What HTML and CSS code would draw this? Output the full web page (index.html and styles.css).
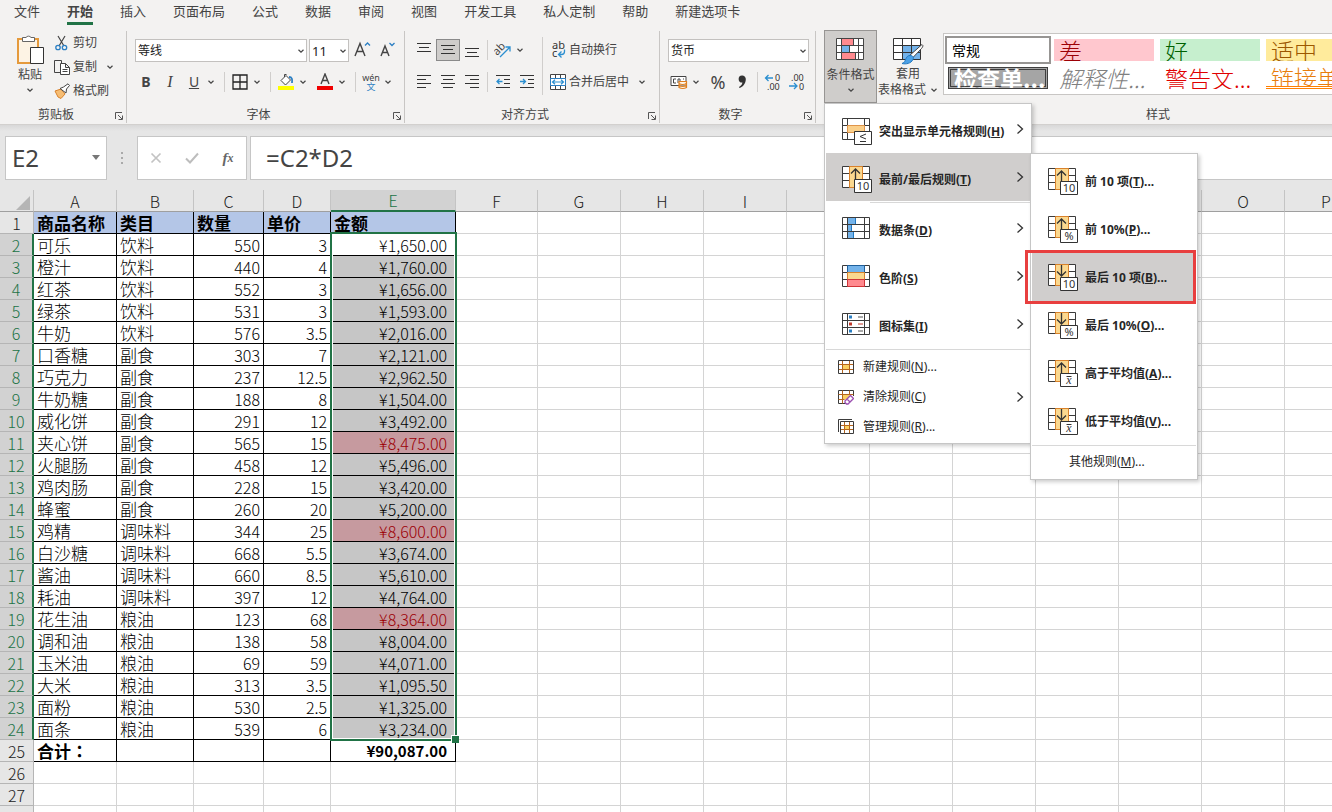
FILE: index.html
```html
<!DOCTYPE html>
<html lang="zh-CN">
<head>
<meta charset="utf-8">
<title>销售数据</title>
<link rel="stylesheet" href="styles.css">
</head>
<body>
<svg class="sprite" aria-hidden="true">
  <symbol id="chev" viewBox="0 0 8 8"><path d="M1.5 2.8 4 5.2 6.5 2.8" fill="none" stroke="#444" stroke-width="1.2"/></symbol>
  <symbol id="arrow" viewBox="0 0 8 12"><path d="M1.5 1.5 6.5 6 1.5 10.5" fill="none" stroke="#333" stroke-width="1.3"/></symbol>
  <symbol id="launch" viewBox="0 0 10 10"><path d="M1.5 8V1.5H8M4 4l4 4M8.5 4.500V8.500H4.500" fill="none" stroke="#555"/></symbol>
  <symbol id="grid" viewBox="0 0 30 28"><path d="M.5.5h27v21H.5zM.5 7.500h27M.5 14.500h27M5.500.5v21M22.500.5v21" fill="#fff" stroke="#3b3b3b"/></symbol>
  <symbol id="rank" viewBox="0 0 30 28">
    <path d="M.5.5h27v21H.5zM.5 7.500h7M.5 14.500h7M20 7.500h7.500M20 14.500h7.500" fill="#fff" stroke="#3b3b3b"/>
    <path d="M7.500.5h13v21h-13z" fill="#fbd88f" stroke="#d9822b"/>
  </symbol>
  <symbol id="up" viewBox="0 0 30 28"><path d="M13.500 14V3M9 7.500 13.500 3 18 7.500" fill="none" stroke="#333" stroke-width="1.300"/></symbol>
  <symbol id="down" viewBox="0 0 30 28"><path d="M13.500 1v11M9 7.500l4.500 4.500L18 7.500" fill="none" stroke="#333" stroke-width="1.300"/></symbol>
  <symbol id="badge" viewBox="0 0 30 28"><path d="M12.500 13.500h17v13h-17z" fill="#fff" stroke="#333"/></symbol>
</svg>

<div class="app">
  <nav class="tabs">
    <button>文件</button><button class="active">开始</button><button>插入</button><button>页面布局</button><button>公式</button><button>数据</button><button>审阅</button><button>视图</button><button>开发工具</button><button>私人定制</button><button>帮助</button><button>新建选项卡</button>
  </nav>

  <div class="ribbon">
    <section class="group clipboard">
      <div class="group-body">
        <button class="big paste">
          <svg width="28" height="32" viewBox="0 0 28 32"><path d="M2 5h20v24H2z" fill="#fdf3e4" stroke="#e59a3c" stroke-width="2"/><path d="M6.500 7.500v-4h3.500a3 3 0 0 1 5 0h3.500v4z" fill="#fff" stroke="#666"/><path d="M14.500 13.500h13v16h-13z" fill="#fff" stroke="#333"/></svg>
          <span>粘贴</span>
          <svg width="8" height="8"><use href="#chev"/></svg>
        </button>
        <div class="stack">
          <button class="cmd"><svg width="16" height="16" viewBox="0 0 16 16"><path d="M4 1l6 10M11 1 5 11" fill="none" stroke="#444" stroke-width="1.200"/><circle cx="4" cy="12.500" r="2.200" fill="none" stroke="#2b7fc3" stroke-width="1.300"/><circle cx="10.500" cy="12.500" r="2.200" fill="none" stroke="#2b7fc3" stroke-width="1.300"/></svg>剪切</button>
          <button class="cmd"><svg width="16" height="16" viewBox="0 0 16 16"><path d="M6 13.500H.5V1.500h7V4" fill="none" stroke="#444"/><path d="M6.500 4.500h5l4 4v7h-9zM11.500 4.500v4h4M8.500 10.500h5M8.500 12.500h5" fill="#fff" stroke="#444"/></svg>复制<svg class="gap" width="8" height="8"><use href="#chev"/></svg></button>
          <button class="cmd"><svg width="16" height="16" viewBox="0 0 16 16"><path d="M1 8l6-2 4 5-4 4.500L4 14z" fill="#f6bd73" stroke="#d9822b"/><path d="M6 5.500 9.500 4 14 .8l1.500 1.700L12.500 6l-.5 4z" fill="#fff" stroke="#444"/></svg>格式刷</button>
        </div>
      </div>
      <div class="group-foot"><span>剪贴板</span><button aria-label="剪贴板设置"><svg width="10" height="10"><use href="#launch"/></svg></button></div>
    </section>

    <section class="group font">
      <div class="group-body rows">
        <div class="row">
          <label class="combo wide"><select aria-label="字体"><option>等线</option></select><svg width="8" height="8"><use href="#chev"/></svg></label>
          <label class="combo size"><select aria-label="字号"><option>11</option></select><svg width="8" height="8"><use href="#chev"/></svg></label>
          <button class="tool" aria-label="增大字号"><svg width="18" height="18" viewBox="0 0 18 18"><path d="M1 15 6 2.500 11 15M2.800 10.500h6.500" fill="none" stroke="#444" stroke-width="1.400"/><path d="M11 4.500 13.500 2 16 4.500" fill="none" stroke="#2b7fc3" stroke-width="1.300"/></svg></button>
          <button class="tool" aria-label="减小字号"><svg width="18" height="18" viewBox="0 0 18 18"><path d="M3 15 7 5l4 10M4.500 11.500h5" fill="none" stroke="#444" stroke-width="1.400"/><path d="M11.500 2 14 4.500 16.500 2" fill="none" stroke="#2b7fc3" stroke-width="1.300"/></svg></button>
        </div>
        <div class="row">
          <button class="tool b">B</button><button class="tool i">I</button><button class="tool u">U</button><button class="drop" aria-label="下划线选项"><svg width="8" height="8"><use href="#chev"/></svg></button><span class="sep"></span>
          <button class="tool" aria-label="边框"><svg width="16" height="16" viewBox="0 0 16 16"><path d="M1 1h14v14H1zM8 1v14M1 8h14" fill="none" stroke="#222" stroke-width="1.300"/></svg></button><button class="drop" aria-label="边框选项"><svg width="8" height="8"><use href="#chev"/></svg></button><span class="sep"></span>
          <button class="tool" aria-label="填充颜色"><svg width="16" height="18" viewBox="0 0 16 18"><path d="M3 7.500 8 2.500l4.500 4.500-5 5zM6.500 4V1.500h2" fill="#fff" stroke="#444"/><path d="M11 4c3 0 3.500 2 3 6" fill="none" stroke="#2b7fc3" stroke-width="1.800"/><path d="M0 13h16v4H0z" fill="#ff0"/></svg></button><button class="drop" aria-label="填充颜色选项"><svg width="8" height="8"><use href="#chev"/></svg></button>
          <button class="tool" aria-label="字体颜色"><svg width="16" height="18" viewBox="0 0 16 18"><path d="M4 11 8 1l4 10M5.300 7.500h5.400" fill="none" stroke="#444" stroke-width="1.400"/><path d="M0 13h16v4H0z" fill="#f00000"/></svg></button><button class="drop" aria-label="字体颜色选项"><svg width="8" height="8"><use href="#chev"/></svg></button><span class="sep"></span>
          <button class="tool pinyin"><span>wén</span><span class="han">文</span></button><button class="drop" aria-label="拼音选项"><svg width="8" height="8"><use href="#chev"/></svg></button>
        </div>
      </div>
      <div class="group-foot"><span>字体</span><button aria-label="字体设置"><svg width="10" height="10"><use href="#launch"/></svg></button></div>
    </section>

    <section class="group align">
      <div class="group-body">
        <div class="rows">
          <div class="row">
            <button class="tool" aria-label="顶端对齐"><svg width="14" height="16" viewBox="0 0 14 16"><path d="M0 1.500h14M2 5.500h10M0 9.500h14" stroke="#333"/></svg></button>
            <button class="tool pressed" aria-label="垂直居中"><svg width="14" height="16" viewBox="0 0 14 16"><path d="M0 3.500h14M2 7.500h10M0 11.500h14" stroke="#333"/></svg></button>
            <button class="tool" aria-label="底端对齐"><svg width="14" height="16" viewBox="0 0 14 16"><path d="M0 6.500h14M2 10.500h10M0 14.500h14" stroke="#333"/></svg></button>
            <span class="sep"></span>
            <button class="tool" aria-label="方向"><svg width="18" height="18" viewBox="0 0 18 18"><text x="0" y="12" font-size="11" fill="#444" transform="rotate(-45 5 10)">ab</text><path d="M6 16 16 6M11.500 6H16v4.500" fill="none" stroke="#2b8fd0" stroke-width="1.300"/></svg></button><button class="drop" aria-label="方向选项"><svg width="8" height="8"><use href="#chev"/></svg></button>
          </div>
          <div class="row">
            <button class="tool" aria-label="左对齐"><svg width="14" height="14" viewBox="0 0 14 14"><path d="M0 .5h14M0 4.500h9M0 8.500h14M0 12.500h9" stroke="#333"/></svg></button>
            <button class="tool" aria-label="居中"><svg width="14" height="14" viewBox="0 0 14 14"><path d="M0 .5h14M2 4.500h10M0 8.500h14M2 12.500h10" stroke="#333"/></svg></button>
            <button class="tool" aria-label="右对齐"><svg width="14" height="14" viewBox="0 0 14 14"><path d="M0 .5h14M5 4.500h9M0 8.500h14M5 12.500h9" stroke="#333"/></svg></button>
            <span class="sep"></span>
            <button class="tool" aria-label="减少缩进"><svg width="14" height="14" viewBox="0 0 14 14"><path d="M0 .5h14M8 4.500h6M8 8.500h6M0 12.500h14" stroke="#333"/><path d="M6.500 6.500H1M3.500 4 1 6.500 3.500 9" fill="none" stroke="#2b8fd0" stroke-width="1.300"/></svg></button>
            <button class="tool" aria-label="增加缩进"><svg width="14" height="14" viewBox="0 0 14 14"><path d="M0 .5h14M8 4.500h6M8 8.500h6M0 12.500h14" stroke="#333"/><path d="M0 6.500h5.500M3 4l2.500 2.500L3 9" fill="none" stroke="#2b8fd0" stroke-width="1.300"/></svg></button>
          </div>
        </div>
        <span class="sep tall"></span>
        <div class="rows wraps">
          <button class="cmd"><svg width="16" height="18" viewBox="0 0 16 18"><text x="2" y="8" font-size="11" fill="#333">ab</text><text x="2" y="16" font-size="11" fill="#333">c</text><path d="M14.500 8.500v2q0 3-3 3H9M11.500 10.500 8.500 13.500l3 3" fill="none" stroke="#2b8fd0" stroke-width="1.300"/></svg>自动换行</button>
          <button class="cmd"><svg width="16" height="16" viewBox="0 0 16 16"><path d="M.5.5h15v15H.5zM5.500.5v15M10.500.5v15" fill="#fff" stroke="#444"/><path d="M.5 4.500h15v7H.5z" fill="#fff" stroke="#2b7fc3"/><path d="M2.500 8h11M5 5.800 2.500 8 5 10.200M11 5.800 13.500 8 11 10.200" fill="none" stroke="#2b8fd0" stroke-width="1.200"/></svg>合并后居中<svg class="gap" width="8" height="8"><use href="#chev"/></svg></button>
        </div>
      </div>
      <div class="group-foot"><span>对齐方式</span><button aria-label="对齐设置"><svg width="10" height="10"><use href="#launch"/></svg></button></div>
    </section>

    <section class="group number">
      <div class="group-body rows">
        <div class="row"><label class="combo format"><select aria-label="数字格式"><option>货币</option></select><svg width="8" height="8"><use href="#chev"/></svg></label></div>
        <div class="row">
          <button class="tool" aria-label="会计数字格式"><svg width="18" height="16" viewBox="0 0 18 16"><path d="M1 2.500h15v9H1z" fill="#fff" stroke="#444"/><path d="M6 5H3.500v4H6M8 9V5h2v4M13 5h1" fill="none" stroke="#444"/><path d="M9 7.500h7.500v6q-3.700 2-7.500 0zM9 9.500q3.700 2 7.500 0M9 11.500q3.700 2 7.500 0" fill="#fff3e4" stroke="#e08020" stroke-width="1.200"/></svg></button><button class="drop" aria-label="会计格式选项"><svg width="8" height="8"><use href="#chev"/></svg></button>
          <button class="tool percent">%</button>
          <button class="tool" aria-label="千位分隔"><svg width="10" height="14" viewBox="0 0 10 14"><path d="M5 .5a3.500 3.500 0 0 1 3.800 3.500C8.800 8.500 6 12 2.500 13l-.5-1c2-1 3.300-2.600 3.400-4.400A3.500 3.500 0 1 1 5 .5z" fill="#333"/></svg></button>
          <span class="sep"></span>
          <button class="tool" aria-label="增加小数位数"><svg width="18" height="18" viewBox="0 0 18 18"><text x="11" y="8" font-size="9" fill="#333">0</text><text x="3" y="17" font-size="9" fill="#333">.00</text><path d="M9 5H1.500M4.500 2 1.500 5l3 3" fill="none" stroke="#2b8fd0" stroke-width="1.300"/></svg></button>
          <button class="tool" aria-label="减少小数位数"><svg width="18" height="18" viewBox="0 0 18 18"><text x="3" y="8" font-size="9" fill="#333">.00</text><text x="11" y="17" font-size="9" fill="#333">0</text><path d="M1 13h8M6 10l3 3-3 3" fill="none" stroke="#2b8fd0" stroke-width="1.300"/></svg></button>
        </div>
      </div>
      <div class="group-foot"><span>数字</span><button aria-label="数字设置"><svg width="10" height="10"><use href="#launch"/></svg></button></div>
    </section>

    <section class="group styles">
      <div class="group-body">
        <div class="menu-anchor cond">
          <button class="big open">
            <svg width="30" height="28" viewBox="0 0 30 28"><g transform="translate(0 4)"><path d="M.5.5h27v21H.5z" fill="#fff"/><path d="M5.500.5h12v7h-12zM5.500 14.500h14v7h-14z" fill="#ff8a8f"/><path d="M5.500 7.500h8v7h-8z" fill="#74b3ea"/><path d="M.5.5h27v21H.5zM.5 7.500h27M.5 14.500h27M5.500.5v21M22.500.5v21M17.500.5v7M19.500 14.500v7M13.500 7.500v7" fill="none" stroke="#444"/></g></svg>
            <span>条件格式</span>
            <svg width="8" height="8"><use href="#chev"/></svg>
          </button>

          <div class="menu main-menu">
            <button class="item"><svg width="30" height="28" viewBox="0 0 30 28"><use href="#grid"/><path d="M5.500 7.500h17v7h-17z" fill="#fbd08a" stroke="#e0954a"/><use href="#badge"/><path d="M24 16l-6 2.500 6 2.500M18 23.500h6" fill="none" stroke="#333"/></svg><span>突出显示单元格规则(<u>H</u>)</span><svg class="arrow" width="8" height="12"><use href="#arrow"/></svg></button>
            <div class="menu-anchor">
              <button class="item hot"><svg width="30" height="28" viewBox="0 0 30 28"><use href="#rank"/><use href="#up"/><use href="#badge"/><text x="21" y="24" text-anchor="middle" font-size="11" fill="#333">10</text></svg><span>最前/最后规则(<u>T</u>)</span><svg class="arrow" width="8" height="12"><use href="#arrow"/></svg></button>
              <div class="menu sub-menu">
                <button class="item"><svg width="30" height="28" viewBox="0 0 30 28"><use href="#rank"/><use href="#up"/><use href="#badge"/><text x="21" y="24" text-anchor="middle" font-size="11" fill="#333">10</text></svg><span>前 10 项(<u>T</u>)...</span></button>
                <button class="item"><svg width="30" height="28" viewBox="0 0 30 28"><use href="#rank"/><use href="#up"/><use href="#badge"/><text x="21" y="24" text-anchor="middle" font-size="11" fill="#333">%</text></svg><span>前 10%(<u>P</u>)...</span></button>
                <button class="item hot marked"><svg width="30" height="28" viewBox="0 0 30 28"><use href="#rank"/><use href="#down"/><use href="#badge"/><text x="21" y="24" text-anchor="middle" font-size="11" fill="#333">10</text></svg><span>最后 10 项(<u>B</u>)...</span></button>
                <button class="item"><svg width="30" height="28" viewBox="0 0 30 28"><use href="#rank"/><use href="#down"/><use href="#badge"/><text x="21" y="24" text-anchor="middle" font-size="11" fill="#333">%</text></svg><span>最后 10%(<u>O</u>)...</span></button>
                <button class="item"><svg width="30" height="28" viewBox="0 0 30 28"><use href="#rank"/><use href="#up"/><use href="#badge"/><text class="mean" x="21" y="24" text-anchor="middle" font-size="12" fill="#333">x</text><path d="M18.500 16.500h5" stroke="#333"/></svg><span>高于平均值(<u>A</u>)...</span></button>
                <button class="item"><svg width="30" height="28" viewBox="0 0 30 28"><use href="#rank"/><use href="#down"/><use href="#badge"/><text class="mean" x="21" y="24" text-anchor="middle" font-size="12" fill="#333">x</text><path d="M18.500 16.500h5" stroke="#333"/></svg><span>低于平均值(<u>V</u>)...</span></button>
                <hr>
                <button class="item small plain"><span>其他规则(<u>M</u>)...</span></button>
              </div>
            </div>
            <hr class="inset">
            <button class="item"><svg width="30" height="28" viewBox="0 0 30 28"><path d="M.5.5h27v21H.5z" fill="#fff"/><path d="M5.500.5h8v7h-4v7h2v7h-6z" fill="#74b3ea" stroke="#1f78c1"/><path d="M.5.5h27v21H.5zM.5 7.500h27M.5 14.500h27M5.500.5v21M22.500.5v21" fill="none" stroke="#3b3b3b"/></svg><span>数据条(<u>D</u>)</span><svg class="arrow" width="8" height="12"><use href="#arrow"/></svg></button>
            <button class="item"><svg width="30" height="28" viewBox="0 0 30 28"><use href="#grid"/><path d="M5.500.5h17v7h-17z" fill="#74b3ea" stroke="#1f5f9a"/><path d="M5.500 7.500h17v7h-17z" fill="#fbd88f" stroke="#d9822b"/><path d="M5.500 14.500h17v7h-17z" fill="#ff8a8f" stroke="#d13438"/></svg><span>色阶(<u>S</u>)</span><svg class="arrow" width="8" height="12"><use href="#arrow"/></svg></button>
            <button class="item"><svg width="30" height="28" viewBox="0 0 30 28"><use href="#grid"/><path d="M7 2.500h3v3H7zM7 16.500h3v3H7z" fill="#2b7fc3"/><path d="M7 9.500h3v3H7z" fill="#c0392b"/><path d="M16 4h5M16 18h5" stroke="#555"/><path d="M16 11h5" stroke="#c0392b"/></svg><span>图标集(<u>I</u>)</span><svg class="arrow" width="8" height="12"><use href="#arrow"/></svg></button>
            <hr class="wide">
            <button class="item small"><svg width="16" height="16" viewBox="0 0 16 16"><path d="M.5 1.500h15v13H.5z" fill="#fff"/><path d="M4.500 5.500h7v5h-7z" fill="#fbd060"/><path d="M4.500 1.500v13M11.500 1.500v13M.5 5.500h15M.5 10.500h15" stroke="#b5651d"/><path d="M.5 1.500h15v13H.5z" fill="none" stroke="#3b3b3b"/></svg><span>新建规则(<u>N</u>)...</span></button>
            <button class="item small"><svg width="16" height="16" viewBox="0 0 16 16"><path d="M9 14.500H.5v-13h15V7" fill="#fff" stroke="#3b3b3b"/><path d="M4.500 5.500h7v3l-3 2h-4z" fill="#fbd060"/><path d="M4.500 1.500v13M11.500 1.500V6M.5 5.500h15M.5 10.500h6" stroke="#b5651d"/><path d="M7 12l5.500-5.500 3 3L10 15H8.500L7 13.500zM9 10l3 3" fill="#fff" stroke="#9b4fb0" stroke-width="1.300"/></svg><span>清除规则(<u>C</u>)</span><svg class="arrow" width="8" height="12"><use href="#arrow"/></svg></button>
            <button class="item small"><svg width="16" height="16" viewBox="0 0 16 16"><path d="M.5 13V.5H14" fill="none" stroke="#3b3b3b"/><path d="M2.500 2.500h13v12h-13z" fill="#fff"/><path d="M6.500 6.500h5v4h-5z" fill="#fbd060"/><path d="M6.500 2.500v12M11.500 2.500v12M2.500 6.500h13M2.500 10.500h13" stroke="#b5651d"/><path d="M2.500 2.500h13v12h-13z" fill="none" stroke="#3b3b3b"/></svg><span>管理规则(<u>R</u>)...</span></button>
          </div>
        </div>

        <button class="big table-style">
          <svg width="32" height="30" viewBox="0 0 32 30"><path d="M1.500 3.500h27v21h-27z" fill="#fff"/><path d="M10.500 10.500h18v14h-18z" fill="#74b3ea"/><path d="M1.500 3.500h27v21h-27zM1.500 10.500h27M1.500 17.500h27M10.500 3.500v21M19.500 3.500v21" fill="none" stroke="#333"/><path d="M30 9.500c1.500 1 1 2-.5 4L20 23.500l-3-2.500z" fill="#fff" stroke="#444"/><path d="M18 20.500c3 0 4 2 3 4-2 4-7 5-11 4 3-1 3-3 4-5s2-3 4-3z" fill="#4aa0e6" stroke="#1f78c1"/></svg>
          <span>套用</span>
          <span class="line2">表格格式<svg width="8" height="8"><use href="#chev"/></svg></span>
        </button>

        <div class="gallery">
          <button class="swatch normal">常规</button><button class="swatch bad">差</button><button class="swatch good">好</button><button class="swatch neutral">适中</button>
          <button class="swatch check">检查单...</button><button class="swatch explain">解释性...</button><button class="swatch warn">警告文...</button><button class="swatch linked">链接单...</button>
        </div>
      </div>
      <div class="group-foot"><span>样式</span></div>
    </section>
  </div>

  <div class="formula-bar">
    <div class="name-box"><input aria-label="名称框" value="E2"><svg width="8" height="5" viewBox="0 0 8 5"><path d="M0 0h8L4 5z" fill="#777"/></svg></div>
    <svg class="dots" width="4" height="14" viewBox="0 0 4 14"><path d="M1 1h2v2H1zM1 6h2v2H1zM1 11h2v2H1z" fill="#aaa"/></svg>
    <div class="fx-box">
      <button aria-label="取消"><svg width="12" height="12" viewBox="0 0 12 12"><path d="M1.500 1.500l9 9M10.500 1.500l-9 9" stroke="#c3c3c3" stroke-width="1.700"/></svg></button>
      <button aria-label="输入"><svg width="14" height="12" viewBox="0 0 14 12"><path d="M1 6.500 5 10.500 13 1.500" fill="none" stroke="#bdbdbd" stroke-width="2"/></svg></button>
      <button class="fx">f<small>x</small></button>
    </div>
    <input class="formula" aria-label="编辑栏" value="=C2*D2">
  </div>

  <div class="sheet"><table id="grid-table"></table></div>
</div>
<script src="sheet.js"></script>
</body>
</html>
```
FILE: styles.css
```css
* { box-sizing: border-box; }

body {
  margin: 0;
  background: #fff;
  color: #444;
  font: 12px/16px "Noto Sans", "Noto Sans CJK SC", sans-serif;
}

button, input, select { font: inherit; color: inherit; }
button { padding: 0; border: 0; background: none; }
svg { display: block; flex: none; }
.sprite { position: absolute; width: 0; height: 0; }

.app {
  display: flex;
  flex-direction: column;
  height: 100vh;
  overflow: hidden;
}

/* Tabs */
.tabs {
  display: flex;
  gap: 27px;
  padding: 0 14px 6px;
  background: #f3f2f1;
}
.tabs button {
  flex: none;
  height: 25px;
  border-bottom: 3px solid transparent;
  font-size: 13px;
  line-height: 22px;
}
.tabs .active { border-color: #217346; font-weight: bold; }

/* Ribbon */
.ribbon {
  display: flex;
  flex: none;
  padding-bottom: 1px;
  background: #f3f2f1;
  border-bottom: 1px solid #d2d0ce;
}
.group {
  display: flex;
  flex: none;
  flex-direction: column;
  height: 92px;
  border-right: 1px solid #c8c6c4;
}
.group-body { display: flex; flex: 1; }
.group-foot { display: flex; align-items: flex-end; height: 16px; }
.group-foot span { flex: 1; text-align: center; }
.group-foot button { width: 14px; padding: 2px; }

.clipboard { width: 127px; }
.font { width: 278px; }
.align { width: 255px; }
.number { width: 156px; }
.styles { flex: 1 0 684px; min-width: 0; border: 0; }

.big {
  display: flex;
  flex-direction: column;
  align-items: center;
}
.paste { width: 32px; margin: 3px 0 0 14px; }
.paste span { margin: 1px 0 3px; }
.stack { display: flex; flex-direction: column; gap: 8px; padding: 4px 0 0 8px; }
.cmd { display: flex; align-items: center; gap: 3px; height: 16px; white-space: nowrap; }
.cmd .gap { margin-left: 6px; }

.rows { display: flex; flex-direction: column; gap: 10px; padding-top: 8px; }
.row { display: flex; align-items: center; height: 22px; }
.font .group-body, .align .group-body, .number .group-body { padding-left: 7px; }
.tool {
  display: flex;
  flex: none;
  align-items: center;
  justify-content: center;
  width: 24px;
  height: 22px;
  font-size: 14px;
}
.drop {
  display: flex;
  align-items: center;
  justify-content: center;
  width: 10px;
  height: 22px;
  margin-right: 5px;
}
.sep { width: 1px; height: 20px; margin: 0 3px; background: #d0cecc; }
.align .drop { margin-right: 0; }
.sep.tall { height: 58px; margin: 6px 7px 0 3px; }
.pressed { border: 1px solid #8a8a8a; background: #cfcdcb; }
.b { font-weight: bold; }
.i { font-family: "Liberation Serif", serif; font-style: italic; font-size: 16px; }
.u { text-decoration: underline; }
.percent { font-size: 18px; }
.pinyin { flex-direction: column; font-size: 9px; line-height: 9px; }
.pinyin .han { color: #2b7fc3; }
.wraps .cmd { height: 22px; }

.combo { position: relative; display: block; margin-left: 1px; }
.combo select {
  width: 100%;
  height: 23px;
  padding: 1px 2px 0;
  border: 1px solid #c3c1bf;
  border-radius: 0;
  background: #fff;
  color: #222;
  appearance: none;
}
.combo svg { position: absolute; right: 2px; top: 8px; pointer-events: none; }
.combo.wide { width: 172px; }
.combo.size { width: 40px; margin: 0 2px; }
.combo.format { width: 141px; }
.combo.size select { font-size: 13px; }

/* Style group */
.menu-anchor { position: relative; }
.cond { margin-top: -1px; }
.styles .open {
  width: 53px;
  height: 73px;
  margin: 0 0 0 8px;
  padding-top: 3px;
  border: 1px solid #979593;
  background: #cfcdcb;
}
.open span { margin: 5px 0 3px; }
.table-style { width: 62px; height: 73px; padding-top: 4px; }
.table-style span:first-of-type { margin-top: 1px; }
.line2 { display: flex; align-items: center; gap: 4px; }
.gallery {
  display: grid;
  flex: 1;
  grid-template-columns: repeat(6, 100px);
  grid-auto-rows: 22px;
  column-gap: 6px;
  row-gap: 6px;
  min-width: 0;
  height: 62px;
  margin: 2px 0 0 4px;
  padding: 5px 4px;
  overflow: hidden;
  border: 1px solid #c8c6c4;
  background: #fff;
}
.swatch {
  height: 22px;
  padding: 0 5px;
  overflow: hidden;
  font: 300 23px/19px "Noto Sans CJK SC", sans-serif;
  text-align: left;
  white-space: nowrap;
}
.gallery .normal {
  height: 28px;
  margin: -3px;
  border: 2px solid #979593;
  color: #000;
  font-size: 14px;
  font-weight: 400;
}
.bad { background: #ffc7ce; color: #9c0006; }
.good { background: #c6efce; color: #006100; }
.neutral { background: #ffeb9c; color: #9c5700; }
.gallery .check {
  grid-column: 1;
  border: 1px solid #3f3f3f;
  background: #a5a5a5;
  box-shadow: inset 0 0 0 1px #a5a5a5, inset 0 0 0 2px #3f3f3f;
  color: #fff;
  font-weight: bold;
  line-height: 16px;
}
.explain { color: #7f7f7f; font-style: italic; }
.warn { color: #e00000; }
.linked { border-bottom: 3px double #ff8001; color: #e87d0d; line-height: 18px; }

/* Menus */
.menu {
  position: absolute;
  z-index: 2;
  padding: 1px;
  border: 1px solid #c6c6c6;
  background: #fff;
  box-shadow: 2px 2px 4px rgba(0, 0, 0, .2);
  color: #262626;
}
.main-menu { top: 73px; left: 8px; width: 208px; padding-bottom: 2px; }
.sub-menu { top: 0; left: 204px; width: 168px; padding: 3px 1px 2px; }
.item {
  display: flex;
  align-items: center;
  gap: 7px;
  width: 100%;
  height: 48px;
  padding: 5px 6px 0 16px;
  font-weight: bold;
  text-align: left;
  white-space: nowrap;
}
.item .arrow { margin: 0 0 5px auto; }
.item text { font-weight: normal; }
.item .mean { font-family: "Liberation Serif", serif; font-style: italic; }
.sub-menu .item { padding-top: 2px; }
.hot { background: #d0cecd; }
.marked { position: relative; }
.marked::after {
  position: absolute;
  inset: -3px 0 -3px -7px;
  border: 3px solid #e83f3f;
  content: "";
}
.item.small { gap: 9px; height: 30px; padding: 2px 6px 0 12px; font-weight: normal; }
.item.small .arrow { margin-bottom: 0; }
.sub-menu .plain { padding: 0 6px 0 37px; }
.menu .item.plain { padding: 0 6px 0 37px; }
.menu hr { height: 1px; margin: 0 0 1px; border: 0; background: #d8d8d8; }
.menu hr.inset { margin: 1px 0 1px 44px; }
.menu hr.wide { margin-top: 1px; }

/* Formula bar */
.formula-bar {
  display: flex;
  flex: none;
  align-items: center;
  height: 65px;
  padding-left: 5px;
  background: linear-gradient(#d8d8d8, #e6e6e6 6px);
}
.name-box, .fx-box, .formula { height: 44px; border: 1px solid #c6c6c6; background: #fff; }
.name-box { display: flex; align-items: center; width: 102px; padding-right: 6px; }
.name-box input { flex: 1; min-width: 0; padding: 0 6px; border: 0; font-size: 24px; }
.dots { margin: 0 13px; }
.fx-box { display: flex; width: 110px; }
.fx-box button { display: flex; flex: 1; align-items: center; justify-content: center; }
.fx-box .fx { font: italic bold 15px/16px "Liberation Serif", serif; color: #666; }
.fx small { font-size: 12px; }
.formula { flex: 1; min-width: 0; margin-left: 3px; padding: 0 15px; border-right: 0; font-size: 24px; }

/* Sheet */
.sheet { flex: 1; min-height: 0; overflow: hidden; }
.sheet table {
  width: 1368px;
  border-spacing: 0;
  table-layout: fixed;
  color: #000;
  font: 16px/20px "Noto Sans CJK SC", sans-serif;
}
.sheet th, .sheet td {
  height: 22px;
  padding: 1px 3px 0;
  border: solid #d4d4d4;
  border-width: 0 1px 1px 0;
  font-weight: 300;
  text-align: right;
  white-space: nowrap;
}
.sheet th { padding: 1px 0 0; border-color: #b5b5b5; background: #e6e6e6; color: #222; text-align: center; }
.sheet thead th { border-right-color: #c4c4c4; border-bottom-color: #9f9f9f; }
.sheet th.on { background: #d2d2d2; color: #217346; }
.sheet thead th.on { border-bottom: 2px solid #217346; line-height: 19px; }
.sheet tbody th.on { border-right: 2px solid #217346; }
.corner svg { margin: 4px 3px 0 auto; }
.sheet td.data { border-color: #000; }
.sheet td.text { font-size: 17px; text-align: left; }
.sheet td.title { background: #b4c6e7; font-weight: bold; }
.sheet td.total { font-family: "Noto Sans CJK TC", sans-serif; font-weight: bold; }
.sheet td.money { padding-right: 8px; }
.sheet td.total.money { font-size: 15px; }
.sheet td.picked { background: #c6c6c6; }
.sheet td.top { background: #c69a9f; color: #9c0006; }
.sheet td.first { position: relative; }
.range {
  position: absolute;
  top: -2px;
  left: -1px;
  width: 127px;
  height: 509px;
  border: 2px solid #217346;
  box-shadow: inset 0 0 0 1px #fff;
}
.range::after {
  position: absolute;
  right: -4px;
  bottom: -4px;
  width: 7px;
  height: 7px;
  border: solid #fff;
  border-width: 1px 0 0 1px;
  background: #217346;
  content: "";
}
```
FILE: sheet.js
```js
const widths = [34, 83, 77, 70, 67, 125, 82, 83, 83, 83, 83, 83, 83, 83, 83, 83, 83];
const letters = "ABCDEFGHIJKLMNOP".split("");
const records = [
  ["商品名称", "类目", "数量", "单价", "金额"],
  ["可乐", "饮料", "550", "3", "¥1,650.00"],
  ["橙汁", "饮料", "440", "4", "¥1,760.00"],
  ["红茶", "饮料", "552", "3", "¥1,656.00"],
  ["绿茶", "饮料", "531", "3", "¥1,593.00"],
  ["牛奶", "饮料", "576", "3.5", "¥2,016.00"],
  ["口香糖", "副食", "303", "7", "¥2,121.00"],
  ["巧克力", "副食", "237", "12.5", "¥2,962.50"],
  ["牛奶糖", "副食", "188", "8", "¥1,504.00"],
  ["威化饼", "副食", "291", "12", "¥3,492.00"],
  ["夹心饼", "副食", "565", "15", "¥8,475.00"],
  ["火腿肠", "副食", "458", "12", "¥5,496.00"],
  ["鸡肉肠", "副食", "228", "15", "¥3,420.00"],
  ["蜂蜜", "副食", "260", "20", "¥5,200.00"],
  ["鸡精", "调味料", "344", "25", "¥8,600.00"],
  ["白沙糖", "调味料", "668", "5.5", "¥3,674.00"],
  ["酱油", "调味料", "660", "8.5", "¥5,610.00"],
  ["耗油", "调味料", "397", "12", "¥4,764.00"],
  ["花生油", "粮油", "123", "68", "¥8,364.00"],
  ["调和油", "粮油", "138", "58", "¥8,004.00"],
  ["玉米油", "粮油", "69", "59", "¥4,071.00"],
  ["大米", "粮油", "313", "3.5", "¥1,095.50"],
  ["面粉", "粮油", "530", "2.5", "¥1,325.00"],
  ["面条", "粮油", "539", "6", "¥3,234.00"],
  ["合计：", "", "", "", "¥90,087.00"]
];
const topRows = [11, 15, 19];

function cell(row, col) {
  const record = records[row - 1];
  if (!record || col > 4) return "<td></td>";
  const names = ["data"];
  if (col < 2 || row === 1 || (row === 25 && col < 4)) names.push("text");
  if (row === 1) names.push("title");
  if (row === 25) names.push("total");
  if (col === 4 && row > 1) names.push("money");
  if (col === 4 && row > 2 && row < 25) names.push(topRows.includes(row) ? "top" : "picked");
  const first = col === 4 && row === 2;
  if (first) names.push("first");
  const lang = row === 25 ? ' lang="zh-TW"' : "";
  return `<td class="${names.join(" ")}"${lang}>${record[col]}${first ? '<div class="range"></div>' : ""}</td>`;
}

let html = "<colgroup>" + widths.map(w => `<col style="width:${w}px">`).join("") + "</colgroup>";
html += '<thead><tr><th class="corner"><svg width="14" height="14" viewBox="0 0 14 14"><path d="M14 0v14H0z" fill="#b5b5b5"/></svg></th>';
html += letters.map(l => `<th${l === "E" ? ' class="on"' : ""}>${l}</th>`).join("") + "</tr></thead><tbody>";
for (let row = 1; row <= 28; row++) {
  html += `<tr><th${row > 1 && row < 25 ? ' class="on"' : ""}>${row}</th>`;
  html += letters.map((_, col) => cell(row, col)).join("") + "</tr>";
}
document.getElementById("grid-table").innerHTML = html + "</tbody>";
```
